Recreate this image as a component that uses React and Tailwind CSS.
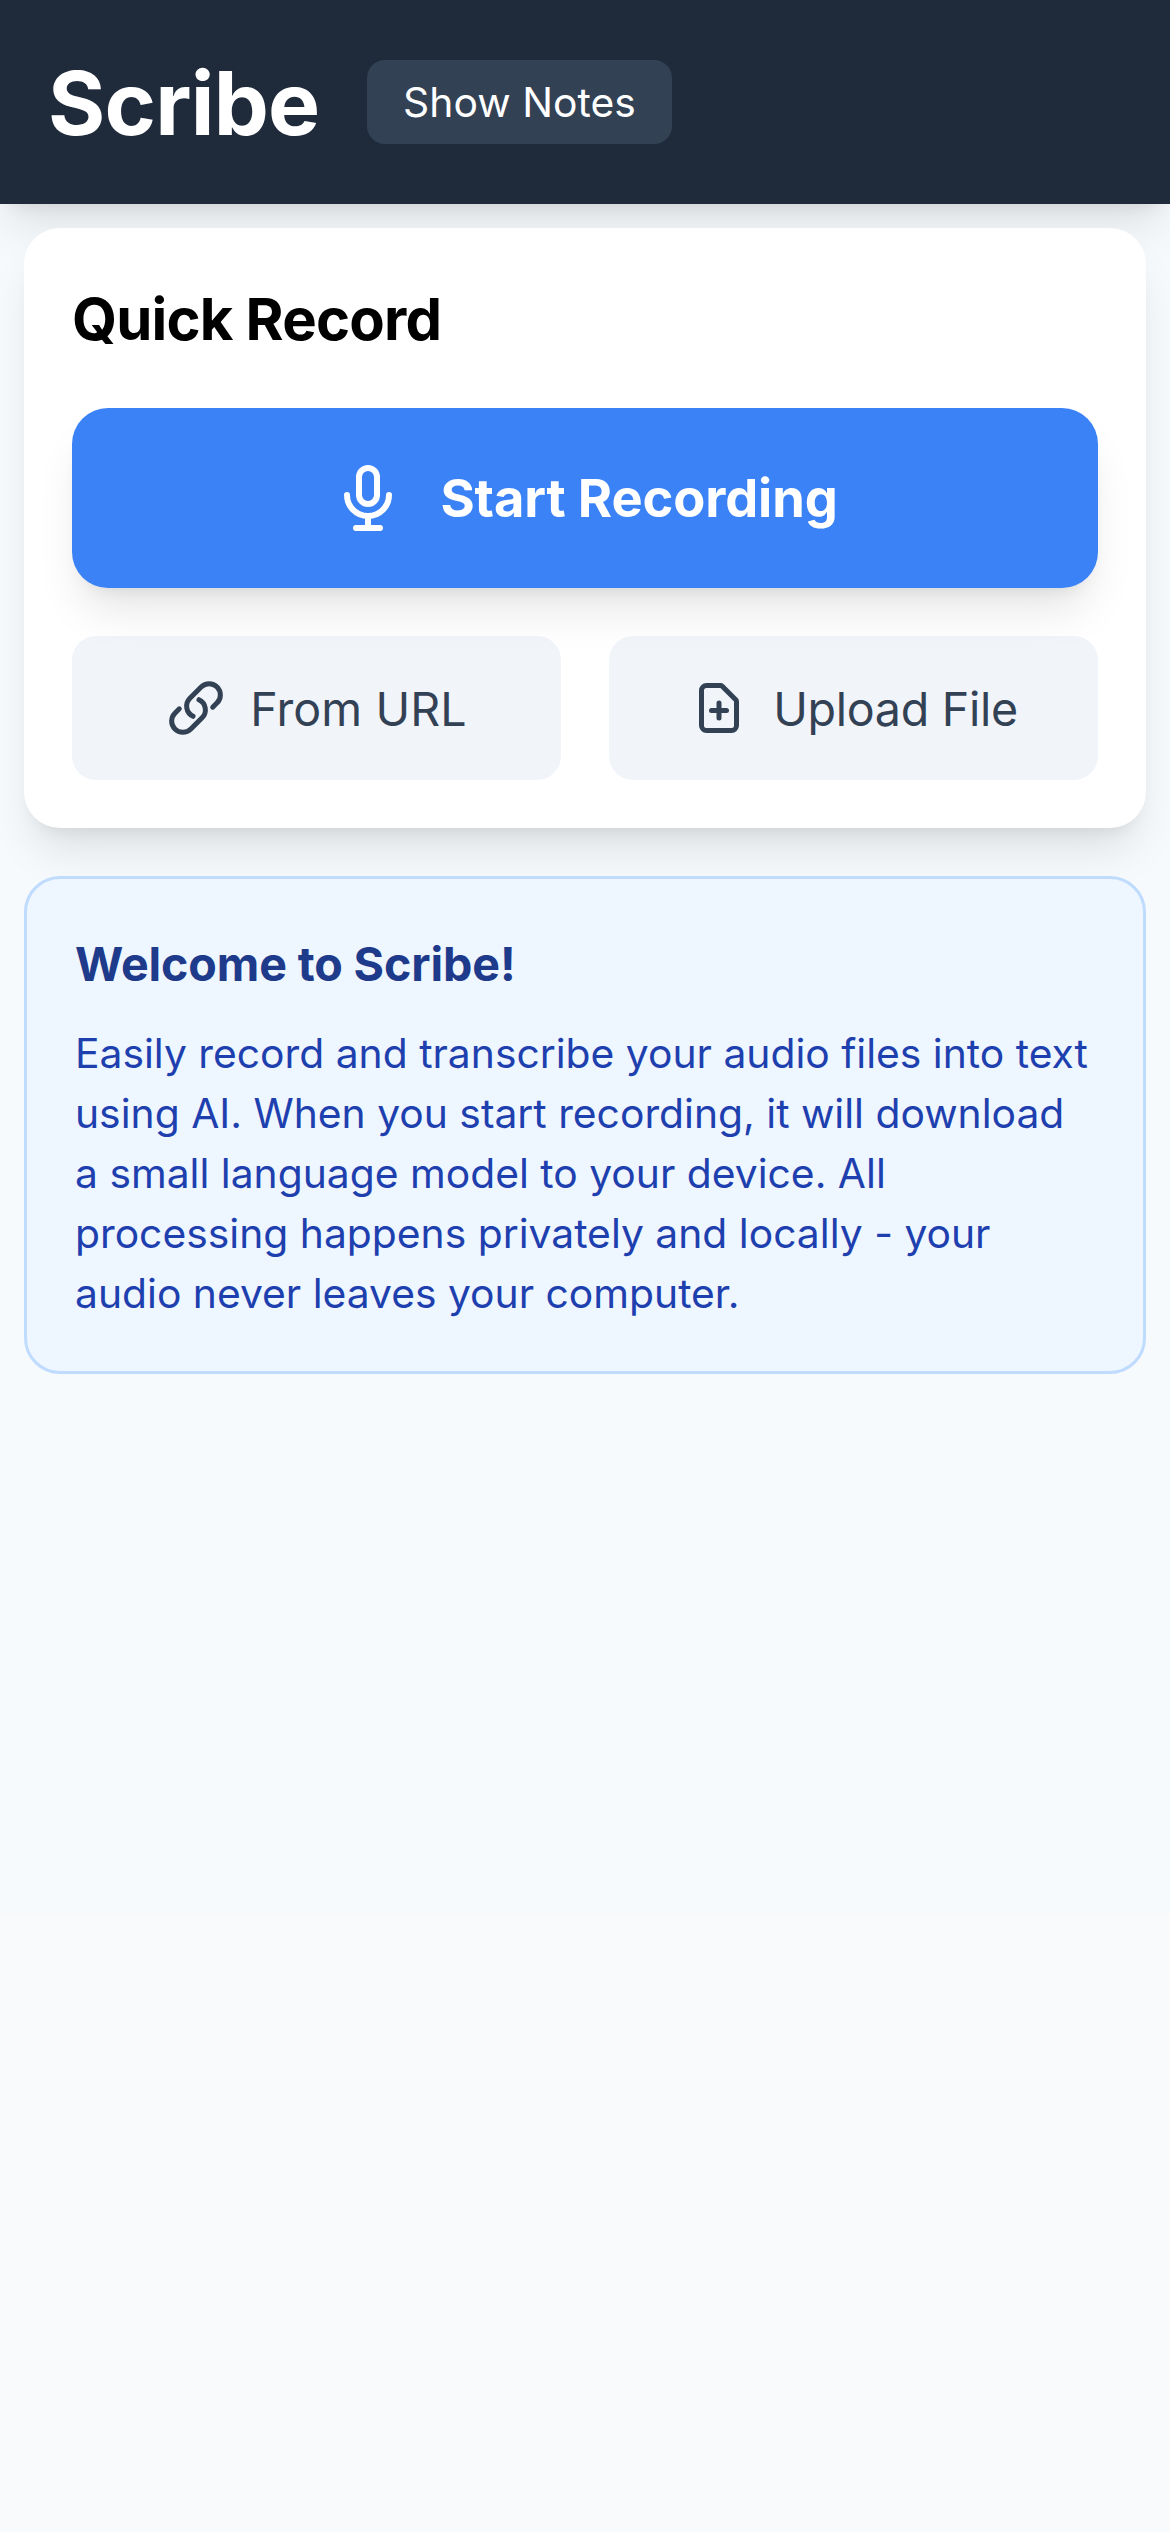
function Icon({ d, className, strokeWidth = 2 }) {
  return (
    <svg
      className={className}
      viewBox="0 0 24 24"
      fill="none"
      stroke="currentColor"
      strokeWidth={strokeWidth}
      strokeLinecap="round"
      strokeLinejoin="round"
      aria-hidden="true"
    >
      <path d={d} />
    </svg>
  );
}

const MIC =
  "M19 11a7 7 0 01-7 7m0 0a7 7 0 01-7-7m7 7v4m0 0H8m4 0h4m-4-8a3 3 0 01-3-3V5a3 3 0 116 0v6a3 3 0 01-3 3z";
const LINK =
  "M13.19 8.688a4.5 4.5 0 0 1 1.242 7.244l-4.5 4.5a4.5 4.5 0 0 1-6.364-6.364l1.757-1.757m13.35-.622 1.757-1.757a4.5 4.5 0 0 0-6.364-6.364l-4.5 4.5a4.5 4.5 0 0 0 1.242 7.244";
const FILE_PLUS =
  "M9 13h6m-3-3v6m5 5H7a2 2 0 01-2-2V5a2 2 0 012-2h5.586a1 1 0 01.707.293l5.414 5.414a1 1 0 01.293.707V19a2 2 0 01-2 2z";

function Header() {
  return (
    <header className="flex h-[204px] items-center gap-12 bg-[#1f2a3b] px-12 text-white shadow-[0_30px_45px_-9px_rgba(0,0,0,0.1),0_12px_18px_-12px_rgba(0,0,0,0.1)]">
      <h1 className="w-[271px] pt-[2px] text-[87.5px] leading-[110px] font-bold tracking-[-0.78px]">
        Scribe
      </h1>
      <button className="h-[84px] w-[305px] rounded-[18px] bg-[#334155] text-[40.8px] leading-[60px] tracking-[0.05px]">
        Show Notes
      </button>
    </header>
  );
}

function QuickRecord() {
  return (
    <section className="flex flex-col gap-12 rounded-[36px] bg-white p-12 shadow-[0_30px_45px_-9px_rgba(0,0,0,0.1),0_12px_18px_-12px_rgba(0,0,0,0.1)]">
      <h2 className="h-[84px] pt-[3px] text-[58px] leading-[81px] font-bold tracking-[-0.8px] text-black">
        Quick Record
      </h2>
      <button className="relative z-10 flex h-[180px] items-center justify-center gap-9 rounded-[36px] bg-[#3b82f6] text-[52.4px] leading-[84px] font-bold tracking-[-0.12px] text-white shadow-[0_30px_45px_-9px_rgba(0,0,0,0.1),0_12px_18px_-12px_rgba(0,0,0,0.1)]">
        <Icon d={MIC} className="size-[72px]" />
        <span>Start Recording</span>
      </button>
      <div className="grid grid-cols-2 gap-12">
        <button className="flex h-36 items-center justify-center gap-6 rounded-3xl bg-[#f1f4f9] text-[46.6px] leading-[72px] tracking-[0.1px] text-[#334155]">
          <Icon d={LINK} className="size-[60px]" />
          <span className="pt-px">From URL</span>
        </button>
        <button className="flex h-36 items-center justify-center gap-6 rounded-3xl bg-[#f1f4f9] text-[46.6px] leading-[72px] tracking-[-0.3px] text-[#334155]">
          <Icon d={FILE_PLUS} className="size-[60px]" />
          <span className="pt-px">Upload File</span>
        </button>
      </div>
    </section>
  );
}

function Welcome() {
  return (
    <section className="rounded-[36px] border-[3px] border-[#bfdbfe] bg-[#eef6ff] p-12">
      <h3 className="mb-6 h-[72px] pt-[2px] text-[46.6px] leading-[70px] font-bold tracking-[-0.12px] text-[#1e3a8a]">
        Welcome to Scribe!
      </h3>
      <p className="text-[40.8px] leading-[60px] text-[#1e40af]">
        Easily record and transcribe your audio files into text using AI. When
        you start recording, it will download a small language model to your
        device. All processing happens privately and locally - your audio never
        leaves your computer.
      </p>
    </section>
  );
}

export default function App() {
  return (
    <div className="min-h-[2532px] w-full bg-[#f9fafb] font-['Inter',sans-serif]">
      <div className="h-[1914px] bg-[#f6fafd]">
        <Header />
        <main className="flex flex-col gap-12 p-6">
          <QuickRecord />
          <Welcome />
        </main>
      </div>
    </div>
  );
}
